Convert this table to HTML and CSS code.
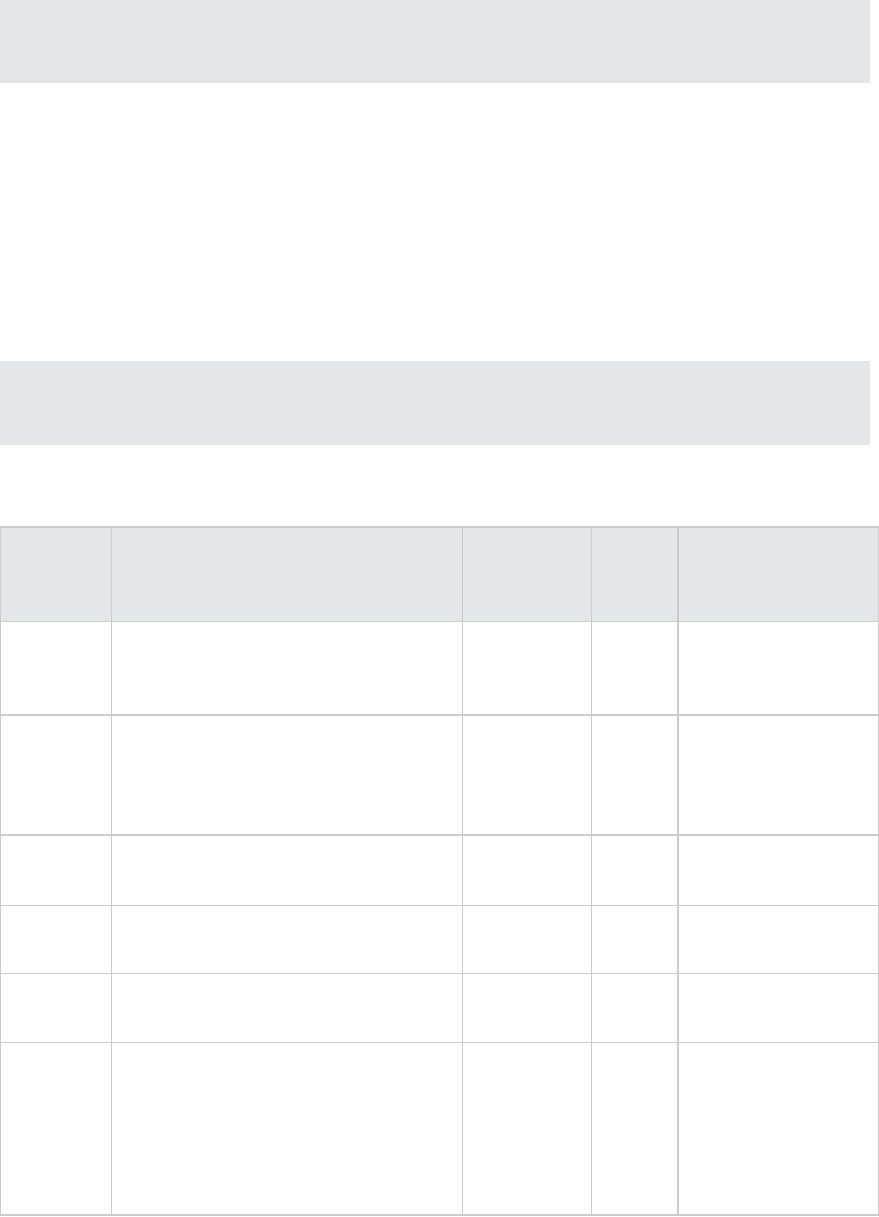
FILE: index.html
```html
<!DOCTYPE html>
<html>
<head>
<meta charset="utf-8">
<link rel="stylesheet" href="styles.css">
</head>
<body>
<div class="page">
  <div class="band band-top"></div>
  <div class="spacer"></div>
  <div class="band band-mid"></div>
  <table class="grid">
    <colgroup>
      <col class="c1"><col class="c2"><col class="c3"><col class="c4"><col class="c5">
    </colgroup>
    <thead>
      <tr class="head"><th></th><th></th><th></th><th></th><th class="last"></th></tr>
    </thead>
    <tbody>
      <tr class="r1 thick"><td></td><td></td><td></td><td></td><td class="last"></td></tr>
      <tr class="r2 thick"><td></td><td></td><td></td><td></td><td class="last"></td></tr>
      <tr class="r3"><td></td><td></td><td></td><td></td><td class="last"></td></tr>
      <tr class="r4"><td></td><td></td><td></td><td></td><td class="last"></td></tr>
      <tr class="r5"><td></td><td></td><td></td><td></td><td class="last"></td></tr>
      <tr class="r6"><td></td><td></td><td></td><td></td><td class="last"></td></tr>
    </tbody>
  </table>
</div>
</body>
</html>
```

FILE: styles.css
```css
html, body {
  margin: 0;
  padding: 0;
  background: #ffffff;
  font-family: "Liberation Sans", Arial, sans-serif;
}

.page {
  width: 879px;
  display: flex;
  flex-direction: column;
}

.band {
  width: 870px;
  background: #e3e7e8;
}

.band-top {
  height: 83px;
}

.spacer {
  height: 278px;
}

.band-mid {
  height: 84px;
  margin-bottom: 81px;
}

.grid {
  width: 878px;
  border-collapse: collapse;
  table-layout: fixed;
  border-top: 2px solid #cccccc;
  border-left: 1px solid #cccccc;
  border-right: 2px solid #cccccc;
  border-bottom: 2px solid #cccccc;
}

.c1 { width: 111px; }
.c2 { width: 351px; }
.c3 { width: 129px; }
.c4 { width: 86px; }
.c5 { width: 201px; }

.grid th,
.grid td {
  padding: 0;
  border: 1px solid #cccccc;
}

.grid th {
  background: #e3e7e8;
}

.grid .last {
  border-left: 2px solid #cccccc;
}

.grid tr.thick td {
  border-bottom: 2px solid #cccccc;
}

.head { height: 94px; }
.r1 { height: 94px; }
.r2 { height: 120px; }
.r3 { height: 70px; }
.r4 { height: 68px; }
.r5 { height: 69px; }
.r6 { height: 173px; }
```
